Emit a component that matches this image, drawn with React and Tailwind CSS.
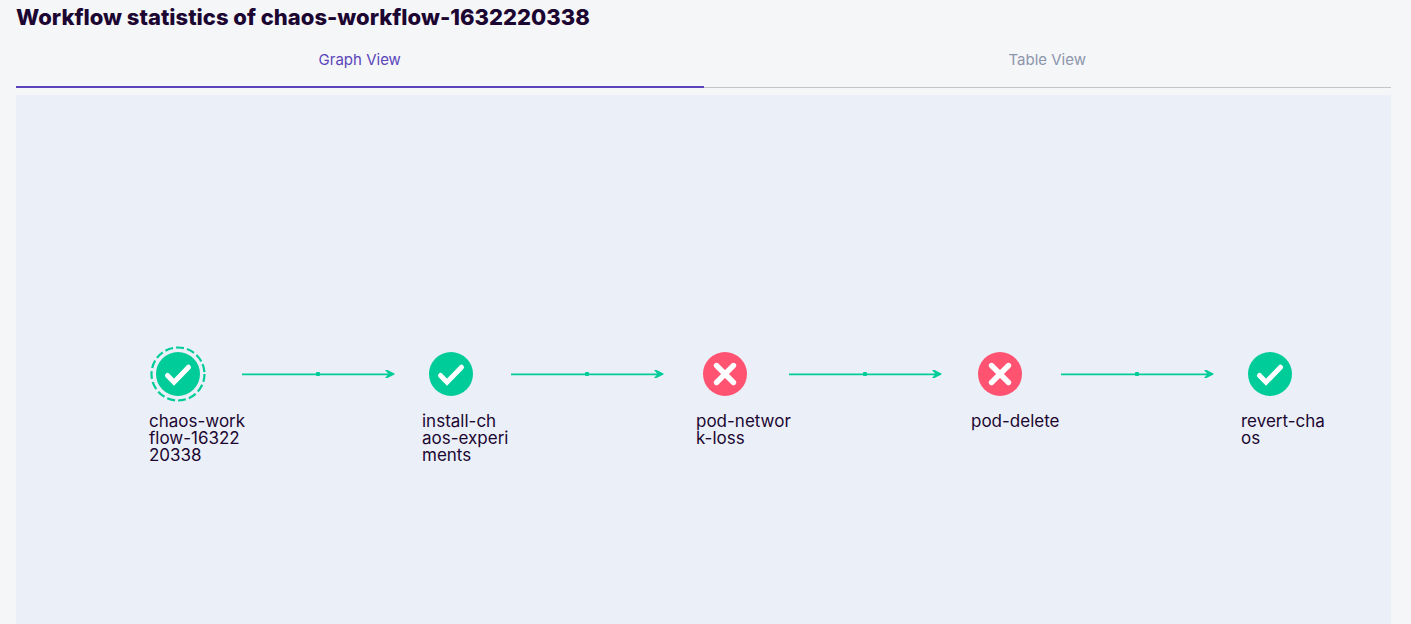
import { useState } from "react";

const nodes = [
  { id: "root", x: 134, status: "ok", selected: true, lines: ["chaos-work", "flow-16322", "20338"] },
  { id: "install", x: 407, status: "ok", lines: ["install-ch", "aos-experi", "ments"] },
  { id: "network", x: 681, status: "failed", lines: ["pod-networ", "k-loss"] },
  { id: "delete", x: 956, status: "failed", lines: ["pod-delete"] },
  { id: "revert", x: 1226, status: "ok", lines: ["revert-cha", "os"] },
];

const edges = [226, 495, 773, 1045];

function StatusIcon({ status, selected }) {
  return (
    <svg width="56" height="56" viewBox="-28 -28 56 56" fill="none" aria-hidden="true">
      {selected && <circle r="26.5" stroke="#00CC9A" strokeWidth="2.2" strokeDasharray="8 3.1" />}
      <circle r="22" fill={status === "ok" ? "#00CC9A" : "#FF5371"} />
      {status === "ok" ? (
        <path d="M-10.5 1.5L-4 8.2L10.5 -6.8" stroke="white" strokeWidth="5" strokeLinecap="round" />
      ) : (
        <path d="M-8.5 -8.5L8.5 8.5M8.5 -8.5L-8.5 8.5" stroke="white" strokeWidth="5.4" strokeLinecap="round" />
      )}
    </svg>
  );
}

function Edge({ x }) {
  return (
    <svg
      className="absolute top-[274px]"
      style={{ left: x }}
      width="154"
      height="10"
      viewBox="0 0 154 10"
      aria-hidden="true"
    >
      <path d="M0 5.3H148" stroke="#00CC9A" strokeWidth="1.7" />
      <rect x="74" y="3" width="4" height="4" rx="1" fill="#00CC9A" />
      <path d="M143 1H145.5L152.5 4.5V5.5L145.5 9H143L146.5 5Z" fill="#00CC9A" />
    </svg>
  );
}

function Node({ node }) {
  return (
    <div className="absolute top-[251px] w-[104px]" style={{ left: node.x }}>
      <StatusIcon status={node.status} selected={node.selected} />
      <p className="mt-[11px] -ml-px text-[17px] leading-[17px] whitespace-nowrap">
        {node.lines.map((line) => (
          <span key={line} className="block">
            {line}
          </span>
        ))}
      </p>
    </div>
  );
}

export default function App() {
  const [tab, setTab] = useState("Graph View");
  return (
    <main className="flex min-h-screen flex-col bg-[#F5F6F8] pr-5 pl-4 font-['Inter',sans-serif] text-[#1C0732]">
      <h1 className="pt-[3px] text-[22px] leading-7 font-extrabold">Workflow statistics of chaos-workflow-1632220338</h1>
      <div role="tablist" className="mt-[5px] flex h-[52px] border-b border-[#C4C4CA]">
        {["Graph View", "Table View"].map((name) => (
          <button
            key={name}
            type="button"
            role="tab"
            aria-selected={tab === name}
            onClick={() => setTab(name)}
            className={
              tab === name
                ? "-mb-px flex-1 border-b-2 border-[#5B44BA] pb-px text-[15px] text-[#5B44BA]"
                : "-mb-px flex-1 border-b-2 border-transparent pb-px text-[15px] text-[#8C95AB]"
            }
          >
            {name}
          </button>
        ))}
      </div>
      <section aria-label="Workflow graph" className="relative mt-[7px] flex-1 overflow-hidden bg-[#EBF0F8]">
        {edges.map((x) => (
          <Edge key={x} x={x} />
        ))}
        {nodes.map((node) => (
          <Node key={node.id} node={node} />
        ))}
      </section>
    </main>
  );
}
